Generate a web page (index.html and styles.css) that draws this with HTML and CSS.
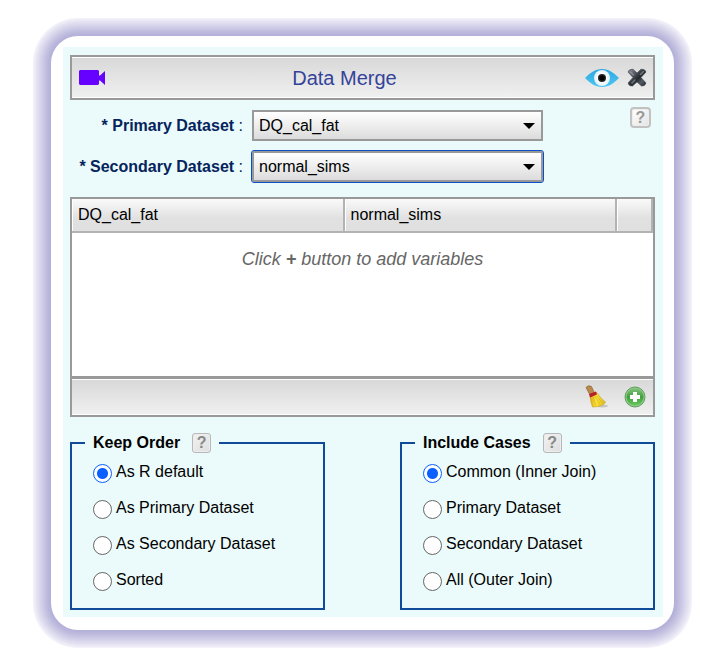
FILE: index.html
```html
<!DOCTYPE html>
<html lang="en">
<head>
<meta charset="utf-8">
<title>Data Merge</title>
<link rel="stylesheet" href="styles.css">
</head>
<body>
<main class="dialog">
  <div class="panel">
    <header class="bar titlebar">
      <button class="icon-button" type="button" aria-label="Video help">
        <svg width="26" height="16" viewBox="0 0 26 16"><path d="M1 0h18l1 1v4.500h1L26 1v14l-5-4.500h-1V14l-1 1H1l-1-1V1z" fill="#6600ff"/></svg>
      </button>
      <h1 class="title">Data Merge</h1>
      <div class="actions">
        <button class="icon-button" type="button" aria-label="Preview">
          <svg width="36" height="20" viewBox="0 0 36 20">
            <defs>
              <linearGradient id="eye" x1="0" y1="0" x2="0" y2="1"><stop offset="0" stop-color="#2ba6df"/><stop offset="1" stop-color="#4cc8f3"/></linearGradient>
              <radialGradient id="white"><stop offset=".5" stop-color="#fff"/><stop offset="1" stop-color="#dceffa"/></radialGradient>
            </defs>
            <path d="M1 10C6 5 11 1 18 1s12 4 17 9c-5 5-10 9-17 9S6 15 1 10z" fill="url(#eye)"/>
            <circle cx="18" cy="10" r="8" fill="url(#white)"/>
            <circle cx="18" cy="10" r="4" fill="#222"/>
            <circle cx="18" cy="10" r="2.500" fill="#000"/>
          </svg>
        </button>
        <button class="icon-button" type="button" aria-label="Close">
          <svg width="20" height="20" viewBox="0 0 20 20">
            <defs><linearGradient id="cross" x1="0" y1="0" x2="1" y2="1"><stop offset="0" stop-color="#8b9096"/><stop offset=".35" stop-color="#4c525a"/><stop offset=".55" stop-color="#23282f"/><stop offset=".75" stop-color="#555c64"/><stop offset="1" stop-color="#22272e"/></linearGradient></defs>
            <path d="M1 4Q2 .8 6 1.200L10 5 14 1.200Q18 .8 19 4L14 9.500 19 15Q18 18.500 14.500 18L10 14 5.500 18Q2 18.500 1 15L6 9.500z" fill="url(#cross)" stroke="#3b4047" stroke-width=".6" stroke-linejoin="round"/>
            <path d="M3.500 4l3 3M13.500 6.500l3-3M5 15l3-3" stroke="#a3a9af" stroke-width="1.500" stroke-linecap="round" opacity=".6"/>
          </svg>
        </button>
      </div>
    </header>

    <section class="datasets">
      <div class="fields">
        <label class="field-label" for="primary"><b>* Primary Dataset</b> :</label>
        <div class="picker"><select id="primary"><option>DQ_cal_fat</option></select></div>
        <label class="field-label" for="secondary"><b>* Secondary Dataset</b> :</label>
        <div class="picker active"><select id="secondary"><option>normal_sims</option></select></div>
      </div>
      <button class="help large" type="button" aria-label="Help">?</button>
    </section>

    <section class="variables">
      <table>
        <colgroup><col><col><col class="narrow"></colgroup>
        <thead><tr><th scope="col">DQ_cal_fat</th><th scope="col">normal_sims</th><td class="spare"></td></tr></thead>
        <tbody><tr><td class="empty" colspan="3">Click <b>+</b> button to add variables</td></tr></tbody>
      </table>
      <footer class="bar tools">
        <button class="icon-button" type="button" aria-label="Clear">
          <svg width="24" height="24" viewBox="0 0 24 24">
            <defs><linearGradient id="straw"><stop offset="0" stop-color="#d9ac14"/><stop offset=".4" stop-color="#fbe23a"/><stop offset="1" stop-color="#dcb81a"/></linearGradient></defs>
            <ellipse cx="17" cy="21" rx="6" ry="1.500" fill="#aaa" opacity=".6"/>
            <path d="M1 2.500Q3-.5 6.500 1.500L9.500 8 5 10z" fill="#b98a4c" stroke="#8a6333" stroke-width=".7"/>
            <path d="M5 11l7-3.500q2.500 5 8.500 9.500-1 2.500-4 3.500-4 1.500-9 1.500-2-5-2.500-11z" fill="url(#straw)" stroke="#c9a31c" stroke-width=".6"/>
            <path d="M8 12l3 8.500M10 11l5 9M11.500 11l6 7" stroke="#d1ab20" stroke-width=".5"/>
            <path d="M4 9l7-2.500 1 3L5 12.500z" fill="#b9202b"/>
          </svg>
        </button>
        <button class="icon-button" type="button" aria-label="Add variables">
          <svg width="22" height="22" viewBox="0 0 22 22">
            <defs><linearGradient id="add" x1="0" y1="0" x2="0" y2="1"><stop offset="0" stop-color="#7fc178"/><stop offset=".5" stop-color="#42a03e"/><stop offset="1" stop-color="#66c85a"/></linearGradient></defs>
            <circle cx="11" cy="11" r="10" fill="#8fcb88" stroke="#5f9c5d"/>
            <circle cx="11" cy="11" r="8.500" fill="url(#add)"/>
            <path d="M11 6v10M6 11h10" stroke="#fff" stroke-width="4"/>
          </svg>
        </button>
      </footer>
    </section>

    <div class="options">
      <fieldset>
        <legend>Keep Order <button class="help" type="button" aria-label="Keep order help">?</button></legend>
        <label class="choice"><input type="radio" name="order" checked><span>As R default</span></label>
        <label class="choice"><input type="radio" name="order"><span>As Primary Dataset</span></label>
        <label class="choice"><input type="radio" name="order"><span>As Secondary Dataset</span></label>
        <label class="choice"><input type="radio" name="order"><span>Sorted</span></label>
      </fieldset>
      <fieldset>
        <legend>Include Cases <button class="help" type="button" aria-label="Include cases help">?</button></legend>
        <label class="choice"><input type="radio" name="cases" checked><span>Common (Inner Join)</span></label>
        <label class="choice"><input type="radio" name="cases"><span>Primary Dataset</span></label>
        <label class="choice"><input type="radio" name="cases"><span>Secondary Dataset</span></label>
        <label class="choice"><input type="radio" name="cases"><span>All (Outer Join)</span></label>
      </fieldset>
    </div>
  </div>
</main>
</body>
</html>
```
FILE: styles.css
```css
* { box-sizing: border-box; }

body {
  margin: 0;
  padding: 36px 49px 20px 51px;
  background: #fff;
  color: #000;
  font: 16px/20px "Liberation Sans", Arial, sans-serif;
}

button, select, input { font: inherit; margin: 0; }

.dialog {
  padding: 11px 11px 13px 12px;
  border-radius: 27px;
  background: #fff;
  box-shadow:
    0 0 0 1px #b5b2d9, 0 0 0 2px #b6b3da, 0 0 0 3px #b9b6db,
    0 0 0 4px #bcb9dd, 0 0 0 5px #bfbddf, 0 0 0 6px #c3c0e0,
    0 0 0 7px #c6c4e2, 0 0 0 8px #cac8e4, 0 0 0 9px #cecce6,
    0 0 0 10px #d2d0e8, 0 0 0 11px #d6d4ea, 0 0 0 12px #dad8ec,
    0 0 0 13px #dedcee, 0 0 0 14px #e2e0f0, 0 0 0 15px #e6e4f2,
    0 0 0 16px #eae9f5, 0 0 0 17px #eeedf7, 0 0 0 18px #f3f2f9;
}

.panel {
  padding: 8px 8px 7px 7px;
  background: #ebfafa;
}

.bar {
  display: flex;
  align-items: center;
  border: 2px solid #999;
  background: linear-gradient(#d8d8d8, #f0f0f0);
  box-shadow: inset 0 1px #fff, inset 0 -1px #fff;
}

.titlebar {
  justify-content: space-between;
  height: 45px;
  padding: 0 6px 0 7px;
}

.title {
  margin: 0;
  color: #34439a;
  font-size: 20px;
  font-weight: 400;
  line-height: 24px;
}

.actions { display: flex; align-items: center; gap: 7px; }

.icon-button {
  display: flex;
  padding: 0;
  border: 0;
  background: none;
}

.datasets {
  display: flex;
  justify-content: space-between;
  align-items: flex-start;
  padding: 10px 4px 15px 3px;
}

.fields {
  flex: 0 1 470px;
  display: grid;
  grid-template-columns: auto minmax(0, 291px);
  align-items: center;
  gap: 10px 9px;
  justify-content: end;
}

.field-label { color: #05235c; text-align: right; }

.picker { display: grid; align-items: center; }

.picker select {
  grid-area: 1 / 1;
  width: 100%;
  height: 31px;
  padding: 0 5px;
  border: 2px solid #999;
  border-radius: 0;
  background: linear-gradient(#fff, #dcdcdc);
  color: #000;
  appearance: none;
}

.picker::after {
  content: "";
  grid-area: 1 / 1;
  justify-self: end;
  margin-right: 8px;
  border: 6px solid transparent;
  border-top-color: #000;
  border-bottom: 0;
  pointer-events: none;
}

.picker.active select { border-radius: 2px; outline: 1px solid #0b4fc4; }

.help {
  display: inline-flex;
  align-items: center;
  justify-content: center;
  width: 19px;
  height: 20px;
  padding: 0;
  border: 1px solid #b8b8b8;
  border-radius: 3px;
  background: linear-gradient(135deg, #f2f2f2, #dedede);
  box-shadow: inset 0 0 0 1px #ededed;
  color: #888;
  font-size: 16px;
  font-weight: 700;
  line-height: 18px;
}

.help.large {
  width: 21px;
  height: 21px;
  margin-top: -3px;
  border: 2px solid #c2c2c2;
  border-radius: 4px;
  background: linear-gradient(135deg, #fff, #e4e4e4);
  color: #999;
}

.variables { background: #fff; }

table {
  width: 100%;
  table-layout: fixed;
  border: 2px solid #999;
  border-bottom: 0;
  border-collapse: separate;
  border-spacing: 0;
}

.narrow { width: 36px; }

th, .spare {
  height: 34px;
  padding: 0 6px;
  border-right: 2px solid #b3b3b3;
  border-bottom: 2px solid #b3b3b3;
  background: linear-gradient(#fafafa, #e1e1e1 60%, #e0e0e0);
  box-shadow: inset 1px 0 #fff;
  font-weight: 400;
  text-align: left;
}

.empty {
  height: 143px;
  padding: 16px 0;
  color: #666;
  font-size: 18px;
  font-style: italic;
  text-align: center;
  vertical-align: top;
}

.tools {
  justify-content: flex-end;
  gap: 15px;
  height: 41px;
  padding: 0 7px;
  border-top-width: 3px;
}

.options {
  display: grid;
  grid-template-columns: 1fr 1fr;
  gap: 75px;
  padding-top: 16px;
}

fieldset {
  min-width: 0;
  margin: 0;
  padding: 9px 21px 2px;
  border: 2px solid #114a99;
}

legend {
  display: flex;
  align-items: center;
  gap: 12px;
  margin-left: -8px;
  padding: 0 8px;
  font-weight: 700;
}

.choice { display: flex; align-items: flex-start; gap: 4px; height: 36px; }

.choice input {
  appearance: none;
  flex: none;
  width: 19px;
  height: 19px;
  margin-top: 2px;
  border: 1px solid #666;
  border-radius: 50%;
  background: #fff;
}

.choice input:checked {
  border-color: #0a60ff;
  background: radial-gradient(circle, #0a60ff 5px, #fff 6px);
}
```
